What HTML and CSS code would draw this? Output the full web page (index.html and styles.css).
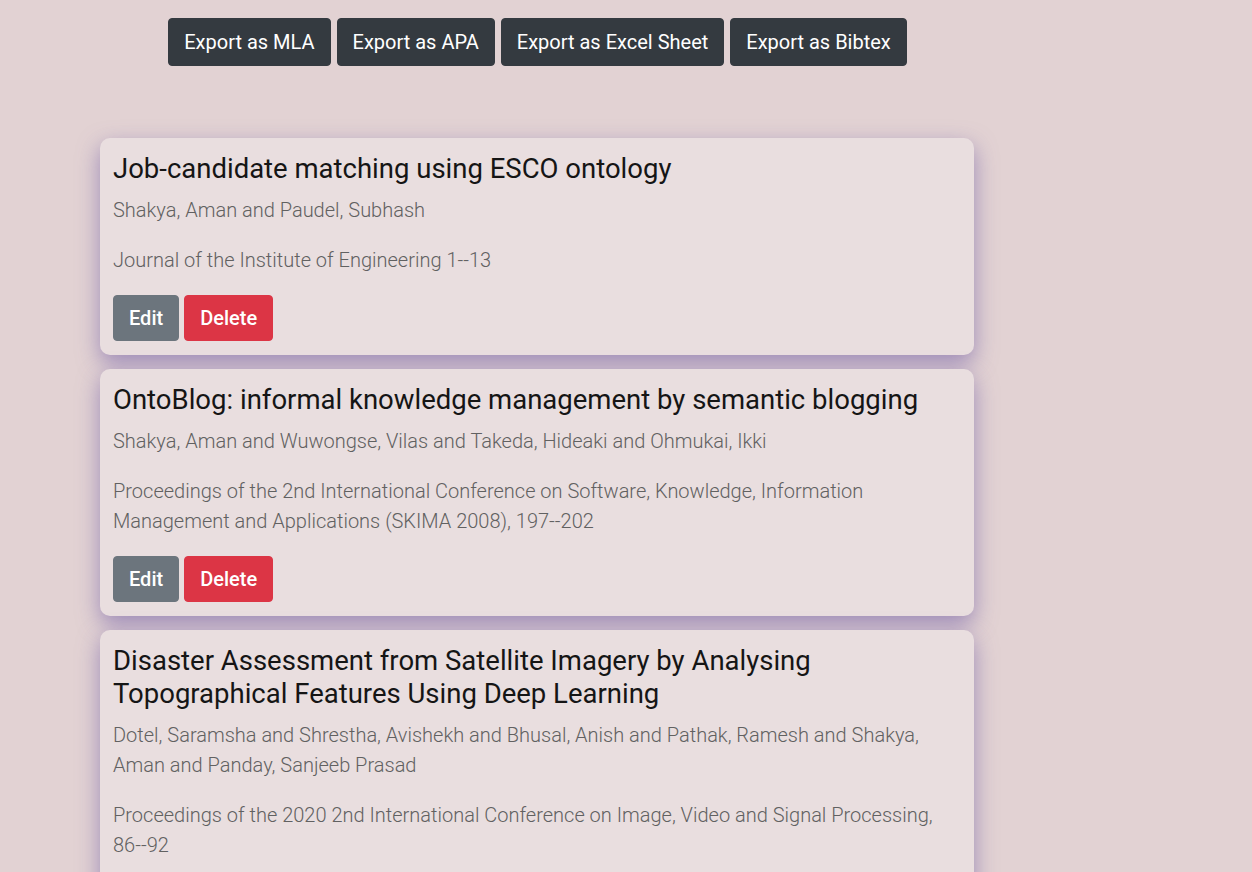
FILE: index.html
```html
<!DOCTYPE html>
<html lang="en">
<head>
<meta charset="utf-8">
<title>Publications</title>
<link rel="stylesheet" href="styles.css">
</head>
<body>
<div class="page">
  <div class="toolbar">
    <button class="btn btn-dark">Export as MLA</button>
    <button class="btn btn-dark">Export as APA</button>
    <button class="btn btn-dark">Export as Excel Sheet</button>
    <button class="btn btn-dark">Export as Bibtex</button>
  </div>
  <div class="list">
    <div class="card">
      <h4 class="title">Job-candidate matching using ESCO ontology</h4>
      <p class="meta">Shakya, Aman and Paudel, Subhash</p>
      <p class="meta">Journal of the Institute of Engineering 1--13</p>
      <div class="actions">
        <button class="btn btn-secondary">Edit</button>
        <button class="btn btn-danger">Delete</button>
      </div>
    </div>
    <div class="card">
      <h4 class="title">OntoBlog: informal knowledge management by semantic blogging</h4>
      <p class="meta">Shakya, Aman and Wuwongse, Vilas and Takeda, Hideaki and Ohmukai, Ikki</p>
      <p class="meta">Proceedings of the 2nd International Conference on Software, Knowledge, Information Management and Applications (SKIMA 2008), 197--202</p>
      <div class="actions">
        <button class="btn btn-secondary">Edit</button>
        <button class="btn btn-danger">Delete</button>
      </div>
    </div>
    <div class="card">
      <h4 class="title">Disaster Assessment from Satellite Imagery by Analysing Topographical Features Using Deep Learning</h4>
      <p class="meta">Dotel, Saramsha and Shrestha, Avishekh and Bhusal, Anish and Pathak, Ramesh and Shakya, Aman and Panday, Sanjeeb Prasad</p>
      <p class="meta">Proceedings of the 2020 2nd International Conference on Image, Video and Signal Processing, 86--92</p>
      <div class="actions">
        <button class="btn btn-secondary">Edit</button>
        <button class="btn btn-danger">Delete</button>
      </div>
    </div>
  </div>
</div>
</body>
</html>
```

FILE: styles.css
```css
html, body {
  margin: 0;
  padding: 0;
  background: #e2d2d3;
  font-family: Roboto, "Liberation Sans", sans-serif;
  height: 100%;
  overflow: hidden;
}
.page {
  width: 874px;
  margin-left: 100px;
  padding-top: 18px;
}
.toolbar {
  display: flex;
  justify-content: center;
  gap: 6px;
  margin-bottom: 72px;
  padding-left: 1px;
}
.btn {
  font-family: Roboto, "Liberation Sans", sans-serif;
  font-size: 20px;
  line-height: 30px;
  font-weight: 400;
  padding: 8px 15px;
  border: 1px solid transparent;
  border-radius: 4px;
  color: #fff;
  cursor: pointer;
}
.btn-dark {
  background: #343a40;
  border-color: #343a40;
}
.actions .btn {
  padding: 7px 15px;
  font-weight: 500;
}
.btn-secondary {
  background: #6c757d;
  border-color: #6c757d;
}
.btn-danger {
  background: #dc3545;
  border-color: #dc3545;
}
.list {
  display: flex;
  flex-direction: column;
  gap: 14px;
}
.card {
  background: #e9dedf;
  border-radius: 10px;
  padding: 14px 13px 14px 13px;
  box-shadow: 0 8px 22px rgba(110, 90, 165, 0.6);
}
.title {
  margin: 0 0 10px 0;
  font-size: 27.5px;
  line-height: 33px;
  font-weight: 400;
  color: #151515;
}
.meta {
  margin: 0 0 20px 0;
  font-size: 20px;
  line-height: 30px;
  font-weight: 300;
  color: #616161;
}
.actions {
  display: flex;
  gap: 5px;
}
.meta + .actions {
  margin-top: 2px;
}
```
